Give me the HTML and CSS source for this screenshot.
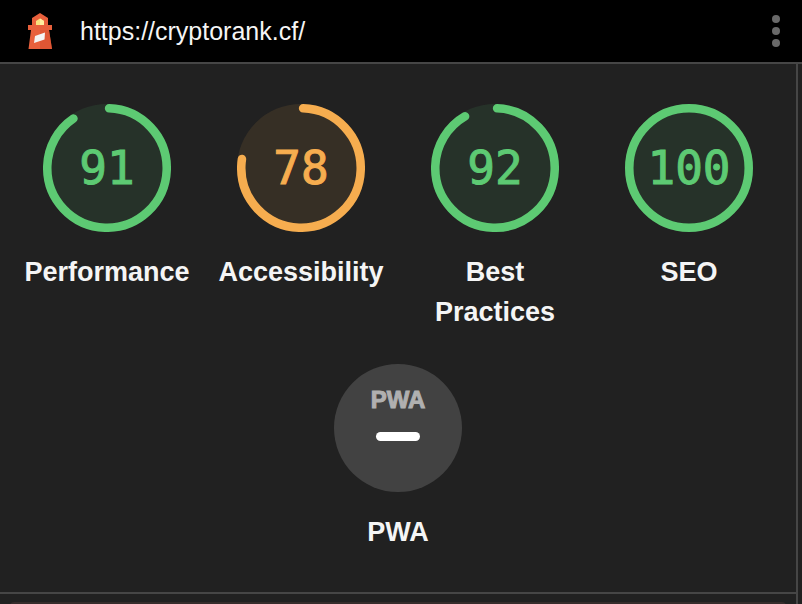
FILE: index.html
```html
<!DOCTYPE html>
<html lang="en">

<head>
    <meta charset="UTF-8" />
    <meta name="viewport" content="width=device-width, initial-scale=1.0" />
    <title>Lighthouse Report</title>
    <link rel="stylesheet" href="styles.css">
</head>

<body>
    <header class="topbar">
        <svg class="topbar-logo" viewBox="0 0 24 36" aria-hidden="true">
            <path fill="#e8603c" d="M12 0l8 5v7h4v5h-3l3 19H.5L3 17H0v-5h4V5z" />
            <path fill="#d9502f" fill-opacity=".6" d="M12 17h9l3 19H12z" />
            <path fill="#f9e27d" d="M8 12V8l4-2.5L16 8v4z" />
            <path fill="#fff0a0" d="M12 5.5L16 8v4h-4z" />
            <path fill="#f4f4f4" d="M7 23l10-3.5-.5 7L6 30z" />
        </svg>
        <a class="topbar-url" href="https://cryptorank.cf/">https://cryptorank.cf/</a>
        <button class="menu-button" type="button" aria-label="Tools menu">
            <svg viewBox="0 0 8 32" aria-hidden="true">
                <circle cx="4" cy="4" r="4" />
                <circle cx="4" cy="16" r="4" />
                <circle cx="4" cy="28" r="4" />
            </svg>
        </button>
    </header>

    <main class="report">
        <section class="scores">
            <a class="gauge pass" href="#performance">
                <span class="gauge-dial">
                    <svg viewBox="0 0 120 120" aria-hidden="true">
                        <circle class="gauge-base" cx="60" cy="60" r="60" />
                        <circle class="gauge-arc" cx="60" cy="60" r="56" stroke-dasharray="316 352" transform="rotate(-88 60 60)" />
                    </svg>
                    <span class="gauge-score">91</span>
                </span>
                <span class="gauge-label">Performance</span>
            </a>

            <a class="gauge average" href="#accessibility">
                <span class="gauge-dial">
                    <svg viewBox="0 0 120 120" aria-hidden="true">
                        <circle class="gauge-base" cx="60" cy="60" r="60" />
                        <circle class="gauge-arc" cx="60" cy="60" r="56" stroke-dasharray="270 352" transform="rotate(-88 60 60)" />
                    </svg>
                    <span class="gauge-score">78</span>
                </span>
                <span class="gauge-label">Accessibility</span>
            </a>

            <a class="gauge pass" href="#best-practices">
                <span class="gauge-dial">
                    <svg viewBox="0 0 120 120" aria-hidden="true">
                        <circle class="gauge-base" cx="60" cy="60" r="60" />
                        <circle class="gauge-arc" cx="60" cy="60" r="56" stroke-dasharray="320 352" transform="rotate(-88 60 60)" />
                    </svg>
                    <span class="gauge-score">92</span>
                </span>
                <span class="gauge-label">Best Practices</span>
            </a>

            <a class="gauge pass" href="#seo">
                <span class="gauge-dial">
                    <svg viewBox="0 0 120 120" aria-hidden="true">
                        <circle class="gauge-base" cx="60" cy="60" r="60" />
                        <circle class="gauge-arc" cx="60" cy="60" r="56" />
                    </svg>
                    <span class="gauge-score">100</span>
                </span>
                <span class="gauge-label">SEO</span>
            </a>

            <a class="gauge" href="#pwa">
                <span class="gauge-dial pwa-badge">
                    <span class="pwa-name">PWA</span>
                    <span class="pwa-dash"></span>
                </span>
                <span class="gauge-label">PWA</span>
            </a>
        </section>

        <section class="category"></section>
    </main>
</body>

</html>
```
FILE: styles.css
```css
:root {
    --pass: #5dca73;
    --average: #f6ad4f;
    --line: #464646;
    --text: #f5f5f5;
}

* {
    box-sizing: border-box;
}

body {
    display: flex;
    flex-direction: column;
    height: 100vh;
    margin: 0;
    overflow: hidden;
    background: #212121;
    color: var(--text);
    font-family: "Liberation Sans", Arial, sans-serif;
}

.topbar {
    display: flex;
    flex: none;
    align-items: center;
    height: 64px;
    padding: 0 18px 0 28px;
    background: #000000;
    border-bottom: 2px solid var(--line);
}

.topbar-logo {
    width: 24px;
    height: 36px;
}

.topbar-url {
    margin-left: 28px;
    color: var(--text);
    font-size: 25px;
    text-decoration: none;
}

.menu-button {
    display: flex;
    margin-left: auto;
    padding: 4px;
    background: none;
    border: none;
    cursor: pointer;
}

.menu-button svg {
    width: 8px;
    height: 32px;
    fill: #696969;
}

.report {
    flex: 1;
    margin-right: 4px;
    border-right: 2px solid var(--line);
}

.scores {
    display: flex;
    flex-wrap: wrap;
    justify-content: center;
    row-gap: 32px;
    padding: 40px 0;
    border-bottom: 2px solid var(--line);
}

.gauge {
    display: flex;
    flex-direction: column;
    align-items: center;
    width: 194px;
    padding: 0 12px;
    color: var(--text);
    text-decoration: none;
}

.gauge.pass {
    --score-color: var(--pass);
}

.gauge.average {
    --score-color: var(--average);
}

/* the score is stacked over the ring in one grid cell */
.gauge-dial {
    display: grid;
    place-items: center;
    width: 128px;
    height: 128px;
}

.gauge-dial svg,
.gauge-score {
    grid-area: 1 / 1;
}

.gauge-dial svg {
    width: 100%;
    height: 100%;
}

.gauge-base {
    fill: var(--score-color);
    fill-opacity: 0.1;
}

.gauge-arc {
    fill: none;
    stroke: var(--score-color);
    stroke-width: 8;
    stroke-linecap: round;
}

.gauge-score {
    color: var(--score-color);
    font-family: "DejaVu Sans Mono", monospace;
    font-size: 46px;
    line-height: 56px;
    -webkit-text-stroke: 1px var(--score-color);
}

.gauge-label {
    margin-top: 20px;
    font-size: 27px;
    font-weight: bold;
    line-height: 40px;
    text-align: center;
}

.pwa-badge {
    align-content: start;
    row-gap: 20px;
    padding-top: 24px;
    background: #424242;
    border-radius: 50%;
}

.pwa-name {
    color: #b0b0b0;
    font-size: 24px;
    font-weight: bold;
    line-height: 24px;
    -webkit-text-stroke: 1px #b0b0b0;
}

.pwa-dash {
    width: 44px;
    height: 9px;
    background: #ffffff;
    border-radius: 5px;
}

.category {
    height: 32px;
    margin: 8px 10px 0;
    border-top: 2px solid #362c2c;
    border-radius: 4px;
}
```
